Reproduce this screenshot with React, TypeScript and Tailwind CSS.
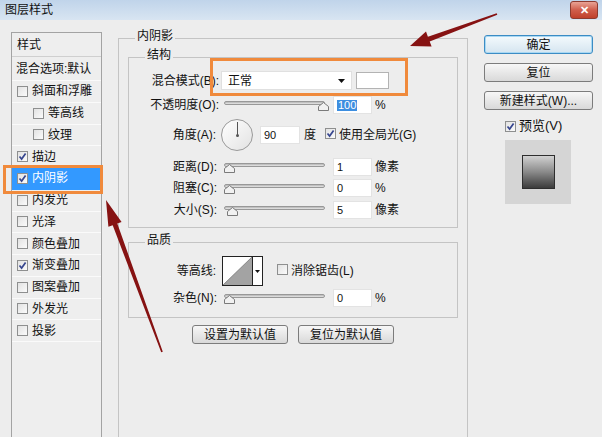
import React from 'react';

const FONT = "font-['Liberation_Sans','Noto_Sans_CJK_SC',sans-serif]";

function Check({ checked }: { checked?: boolean }) {
  return (
    <span className="relative inline-flex h-[11px] w-[11px] shrink-0 items-center justify-center border border-[#8e8f8f] bg-gradient-to-br from-[#e2e2e2] to-[#fbfbfb]">
      {checked && (
        <svg width="9" height="9" viewBox="0 0 9 9" className="absolute">
          <path d="M1.5 4.5 L3.6 7 L7.6 1.4" fill="none" stroke="#37468f" strokeWidth="1.7" />
        </svg>
      )}
    </span>
  );
}

function Slider({ pos }: { pos: number }) {
  return (
    <div className="relative ml-[5px] h-[18px] w-[101px] shrink-0">
      <div className="absolute left-0 right-0 top-[5px] h-[4px] rounded-full border border-[#989898] bg-gradient-to-b from-[#b4b4b4] to-[#e8e8e8]" />
      <svg className="absolute top-[6px]" style={{ left: pos }} width="11" height="9" viewBox="0 0 11 9">
        <path d="M5.5 0.5 L10.5 4.5 L10.5 8.5 L0.5 8.5 L0.5 4.5 Z" fill="#f1f1f1" stroke="#7a7a7a" />
      </svg>
    </div>
  );
}

function NumBox({ children, className = '' }: { children: React.ReactNode; className?: string }) {
  return (
    <div className={`flex h-[18px] w-[39px] shrink-0 items-center border border-[#e3e3e3] bg-white pl-[3px] text-[11px] leading-none ${className}`}>
      {children}
    </div>
  );
}

function Label({ children, className = 'w-[90px]' }: { children: React.ReactNode; className?: string }) {
  return <span className={`shrink-0 text-right ${className}`}>{children}</span>;
}

function Group({ title, className = '', children }: { title: string; className?: string; children?: React.ReactNode }) {
  return (
    <div className={`relative border border-[#c4c4c4] ${className}`}>
      <span className="absolute -top-[11px] left-[16px] bg-[#ededed] px-[2px] leading-[16px]">{title}</span>
      {children}
    </div>
  );
}

function Btn({ children, primary, className = '' }: { children: React.ReactNode; primary?: boolean; className?: string }) {
  return (
    <div
      className={`flex h-[19px] items-center justify-center rounded-[3px] border text-[12px] leading-none ${
        primary
          ? 'border-[#3c8cc4] bg-gradient-to-b from-[#f4fafd] to-[#d5e5f0] shadow-[inset_0_0_0_1px_#a9d8f3]'
          : 'border-[#7c7c7c] bg-gradient-to-b from-[#f7f7f7] to-[#d9d9d9]'
      } ${className}`}
    >
      {children}
    </div>
  );
}

const styles = [
  { label: '斜面和浮雕' },
  { label: '等高线', indent: true },
  { label: '纹理', indent: true },
  { label: '描边', on: true },
  { label: '内阴影', on: true, selected: true },
  { label: '内发光' },
  { label: '光泽' },
  { label: '颜色叠加' },
  { label: '渐变叠加', on: true },
  { label: '图案叠加' },
  { label: '外发光' },
  { label: '投影' },
];

export default function App() {
  return (
    <div className={`relative h-[437px] w-[602px] overflow-hidden bg-[#ededed] text-[12px] text-[#111] ${FONT}`}>
      {/* title bar */}
      <div className="flex h-[20px] items-start justify-between bg-gradient-to-b from-[#c0d4ea] to-[#d8e5f2]">
        <span className="ml-[5px] mt-[2px] leading-[16px]">图层样式</span>
        <div className="mr-[4px] mt-[1px] flex h-[18px] w-[28px] items-center justify-center rounded-[3px] border border-[#8d3b30] bg-gradient-to-b from-[#e8a395] via-[#cf5d4c] to-[#c0402c] text-[11px] font-bold leading-none text-white">
          ✕
        </div>
      </div>

      <div className="flex items-start">
        {/* style list */}
        <div className="ml-[11px] mt-[12px] h-[420px] w-[91px] shrink-0 border-x border-t border-[#a3a3a3] bg-[#eeeeee]">
          <div className="flex h-[24px] items-center border-b border-[#cfcfcf] pl-[5px]">样式</div>
          <div className="flex h-[24px] items-center border-b border-[#fafafa] pl-[4px]">混合选项:默认</div>
          {styles.map((s) => (
            <div
              key={s.label}
              className={`flex h-[21.75px] items-center gap-[4px] border-b ${
                s.selected ? 'border-[#3399ff] bg-[#3399ff] text-white' : 'border-[#fafafa]'
              } ${s.indent ? 'pl-[21px]' : 'pl-[5px]'}`}
            >
              <Check checked={s.on} />
              <span>{s.label}</span>
            </div>
          ))}
        </div>

        {/* main group */}
        <Group title="内阴影" className="ml-[16px] mt-[18px] h-[420px] w-[350px] shrink-0 border-[#b4b4b4]">
          <Group title="结构" className="mx-[9px] mt-[18px] flex h-[171px] flex-col">
            <div className="mt-[13px] flex h-[19px] items-center">
              <Label>混合模式(B):</Label>
              <div className="ml-[2px] flex h-[19px] w-[131px] items-center justify-between border border-[#e0e0e0] bg-white pl-[6px] pr-[6px]">
                <span>正常</span>
                <svg width="7" height="4" viewBox="0 0 7 4">
                  <path d="M0 0H7L3.5 4Z" fill="#111" />
                </svg>
              </div>
              <div className="ml-[4px] h-[17px] w-[33px] border border-[#b3b3b3] bg-white" />
            </div>

            <div className="mt-[6px] flex h-[18px] items-center">
              <Label>不透明度(O):</Label>
              <Slider pos={94} />
              <NumBox className="ml-[8px]">
                <span className="bg-[#3d8ee0] px-[1px] text-white">100</span>
              </NumBox>
              <span className="ml-[3px]">%</span>
            </div>

            <div className="mt-[5px] flex h-[32px] items-center">
              <Label className="w-[87px]">角度(A):</Label>
              <div className="relative ml-[5px] h-[32px] w-[32px] shrink-0 rounded-full border border-[#9a9a9a] bg-gradient-to-br from-[#ffffff] to-[#e2e2e2]">
                <div className="absolute left-[15px] top-[2px] h-[14px] w-[1px] bg-[#555]" />
                <div className="absolute left-[14px] top-[14px] h-[3px] w-[3px] rounded-full bg-[#555]" />
              </div>
              <NumBox className="ml-[7px] h-[17px] w-[40px]">90</NumBox>
              <span className="ml-[4px]">度</span>
              <span className="ml-[9px]">
                <Check checked />
              </span>
              <span className="ml-[3px]">使用全局光(G)</span>
            </div>

            <div className="mt-[7px] flex h-[18px] items-center">
              <Label className="w-[88px]">距离(D):</Label>
              <span className="w-[2px]" />
              <Slider pos={0} />
              <NumBox className="ml-[8px]">1</NumBox>
              <span className="ml-[3px]">像素</span>
            </div>

            <div className="mt-[3px] flex h-[18px] items-center">
              <Label className="w-[88px]">阻塞(C):</Label>
              <span className="w-[2px]" />
              <Slider pos={0} />
              <NumBox className="ml-[8px]">0</NumBox>
              <span className="ml-[3px]">%</span>
            </div>

            <div className="mt-[4px] flex h-[18px] items-center">
              <Label className="w-[88px]">大小(S):</Label>
              <span className="w-[2px]" />
              <Slider pos={3} />
              <NumBox className="ml-[8px]">5</NumBox>
              <span className="ml-[3px]">像素</span>
            </div>
          </Group>

          <Group title="品质" className="mx-[9px] mt-[14px] flex h-[76px] flex-col">
            <div className="mt-[13px] flex h-[30px] items-center">
              <Label className="w-[87px]">等高线:</Label>
              <div className="ml-[6px] flex h-[30px] w-[41px] shrink-0 border border-[#222] bg-white">
                <svg width="29" height="28" viewBox="0 0 29 28" className="shrink-0">
                  <polygon points="0,28 29,0 29,28" fill="#a3a3a3" />
                  <line x1="0" y1="28" x2="29" y2="0" stroke="#777" strokeWidth="0.8" />
                </svg>
                <div className="flex flex-1 items-center justify-center border-l border-[#222]">
                  <svg width="5" height="3" viewBox="0 0 5 3">
                    <path d="M0 0H5L2.5 3Z" fill="#111" />
                  </svg>
                </div>
              </div>
              <span className="ml-[14px]">
                <Check />
              </span>
              <span className="ml-[3px]">消除锯齿(L)</span>
            </div>
            <div className="mt-[3px] flex h-[18px] items-center">
              <Label className="w-[88px]">杂色(N):</Label>
              <span className="w-[2px]" />
              <Slider pos={0} />
              <NumBox className="ml-[8px]">0</NumBox>
              <span className="ml-[3px]">%</span>
            </div>
          </Group>

          <div className="mt-[7px] flex justify-center gap-[10px]">
            <Btn className="w-[96px]">设置为默认值</Btn>
            <Btn className="w-[96px]">复位为默认值</Btn>
          </div>
        </Group>

        {/* right buttons */}
        <div className="ml-[16px] mt-[15px] flex w-[109px] shrink-0 flex-col">
          <Btn primary>确定</Btn>
          <Btn className="mt-[9px]">复位</Btn>
          <Btn className="mt-[9px]">新建样式(W)...</Btn>
          <div className="ml-[21px] mt-[10px] flex h-[12px] items-center gap-[3px]">
            <Check checked />
            <span className="text-[13px]">预览(V)</span>
          </div>
          <div className="ml-[21px] mt-[8px] flex h-[64px] w-[66px] items-center justify-center bg-[#d5d5d5]">
            <div className="h-[34px] w-[33px] border border-[#2e2e2e] bg-gradient-to-b from-[#d2d2d2] via-[#8a8a8a] to-[#3c3c3c]" />
          </div>
        </div>
      </div>

      {/* annotation highlights */}
      <div className="pointer-events-none absolute left-[210px] top-[58px] h-[38px] w-[198px] border-[3px] border-[#f08a3c]" />
      <div className="pointer-events-none absolute left-[3px] top-[165px] h-[29px] w-[100px] border-[3px] border-[#f08a3c]" />

      {/* annotation arrows */}
      <svg className="pointer-events-none absolute left-0 top-0" width="602" height="437" viewBox="0 0 602 437">
        <polygon
          points="410,46 426,31.6 427.9,36.8 496.7,13.2 497.3,14.8 429.7,41.4 431.6,46.6"
          fill="#861212"
        />
        <polygon
          points="106,200 108.4,226.8 112.7,225.3 161.2,352.3 162.8,351.7 117.3,223.5 121.6,222"
          fill="#861212"
        />
      </svg>
    </div>
  );
}
